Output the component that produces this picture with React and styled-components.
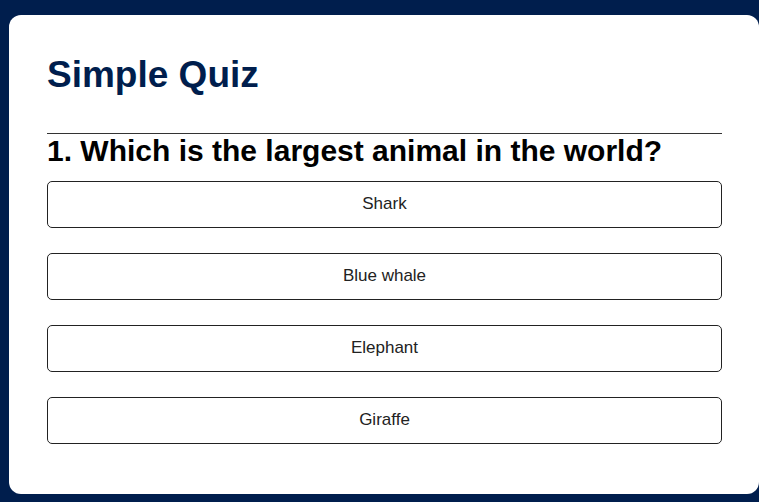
import React, { useState } from "react";
import styled, { createGlobalStyle } from "styled-components";

const GlobalStyle = createGlobalStyle`
  * { box-sizing: border-box; margin: 0; padding: 0; }
  body {
    background: #001e4d;
    font-family: "Liberation Sans", Arial, sans-serif;
  }
`;

const Page = styled.div`
  min-height: 100vh;
  padding: 15px 0 8px 9px;
`;

const Card = styled.main`
  padding: 38px 37px 50px 38px;
  background: #fff;
  border-radius: 12px;
`;

const Title = styled.h1`
  padding-bottom: 37px;
  border-bottom: 1px solid #333;
  color: #001e4d;
  font-size: 37px;
  line-height: 43px;
`;

const Question = styled.h2`
  color: #000;
  font-size: 30px;
  line-height: 34px;
`;

const Answers = styled.div`
  display: flex;
  flex-direction: column;
  gap: 25px;
  margin-top: 13px;
`;

const Answer = styled.button`
  width: 100%;
  height: 47px;
  padding: 0 10px 2px;
  background: #fff;
  border: 1px solid #222;
  border-radius: 5px;
  color: #222;
  font: 17px/18px "Liberation Sans", Arial, sans-serif;
  text-align: center;
  cursor: pointer;

  &:hover {
    background: #222;
    color: #fff;
  }
`;

const answers = ["Shark", "Blue whale", "Elephant", "Giraffe"];

export default function App() {
  const [selected, setSelected] = useState(null);
  return (
    <Page>
      <GlobalStyle />
      <Card>
        <Title>Simple Quiz</Title>
        <Question>1. Which is the largest animal in the world?</Question>
        <Answers>
          {answers.map((answer) => (
            <Answer
              key={answer}
              type="button"
              aria-pressed={selected === answer}
              onClick={() => setSelected(answer)}
            >
              {answer}
            </Answer>
          ))}
        </Answers>
      </Card>
    </Page>
  );
}
